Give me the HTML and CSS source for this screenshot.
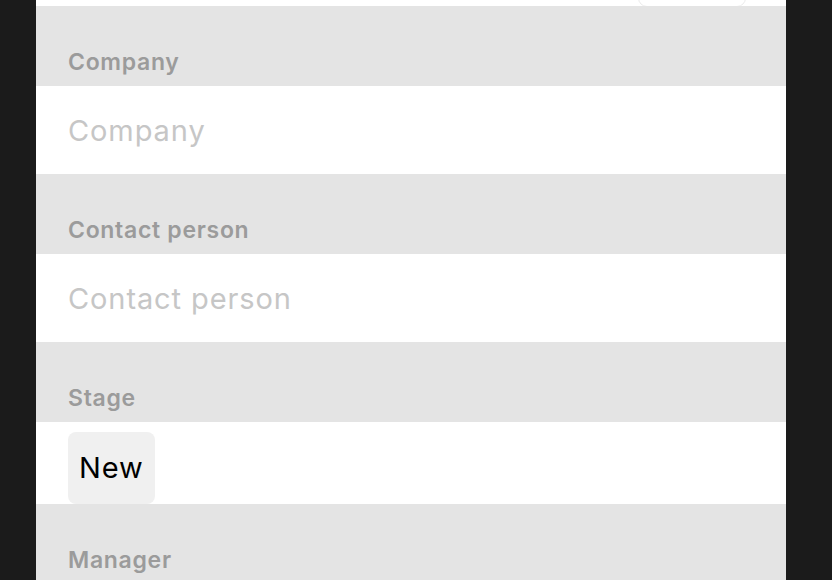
FILE: index.html
```html
<!DOCTYPE html>
<html lang="en">
<head>
    <meta charset="UTF-8">
    <meta name="viewport" content="width=device-width, initial-scale=1.0">
    <title>New deal</title>
    <link rel="stylesheet" href="styles.css">
</head>
<body>

<div class="sheet">
    <div class="top-bar">
        <div class="top-btn"></div>
    </div>

    <div class="group-label">Company</div>
    <div class="field">
        <input type="text" placeholder="Company">
    </div>

    <div class="group-label">Contact person</div>
    <div class="field">
        <input type="text" placeholder="Contact person">
    </div>

    <div class="group-label">Stage</div>
    <div class="field field-chips">
        <span class="chip">New</span>
    </div>

    <div class="group-label">Manager</div>
</div>

</body>
</html>
```

FILE: styles.css
```css
body {
    font-family: 'Inter', 'Liberation Sans', sans-serif;
    background-color: #1b1b1b;
    margin: 0;
    padding: 0;
    height: 580px;
    overflow: hidden;
}
.sheet {
    width: 750px;
    margin-left: 36px;
    background-color: #e4e4e4;
    height: 580px;
    overflow: hidden;
}
.top-bar {
    height: 6px;
    background-color: #fff;
    overflow: hidden;
    display: flex;
    justify-content: flex-end;
}
.top-btn {
    width: 106px;
    height: 40px;
    margin-top: -35px;
    margin-right: 40px;
    border: 1px solid #ebebeb;
    border-radius: 9px;
    background-color: #fff;
}
.group-label {
    padding: 44px 32px 12px;
    line-height: 24px;
    font-size: 23px;
    font-weight: 600;
    letter-spacing: 0.7px;
    color: #9b9b9b;
}
.field {
    background-color: #fff;
    height: 88px;
    padding: 0 32px;
    display: flex;
    align-items: center;
}
.field input {
    border: none;
    outline: none;
    padding: 0;
    width: 100%;
    font-family: inherit;
    font-size: 29px;
    letter-spacing: 0.9px;
    color: #000;
    background: transparent;
}
.field input::placeholder {
    color: #c6c6c6;
}
.field-chips {
    height: 82px;
    align-items: flex-start;
    padding-top: 10px;
    box-sizing: border-box;
}
.chip {
    display: inline-block;
    background-color: #f0f0f0;
    border-radius: 8px;
    height: 72px;
    line-height: 72px;
    padding: 0 11px;
    font-size: 29px;
    letter-spacing: 0.9px;
    color: #000;
}
```
